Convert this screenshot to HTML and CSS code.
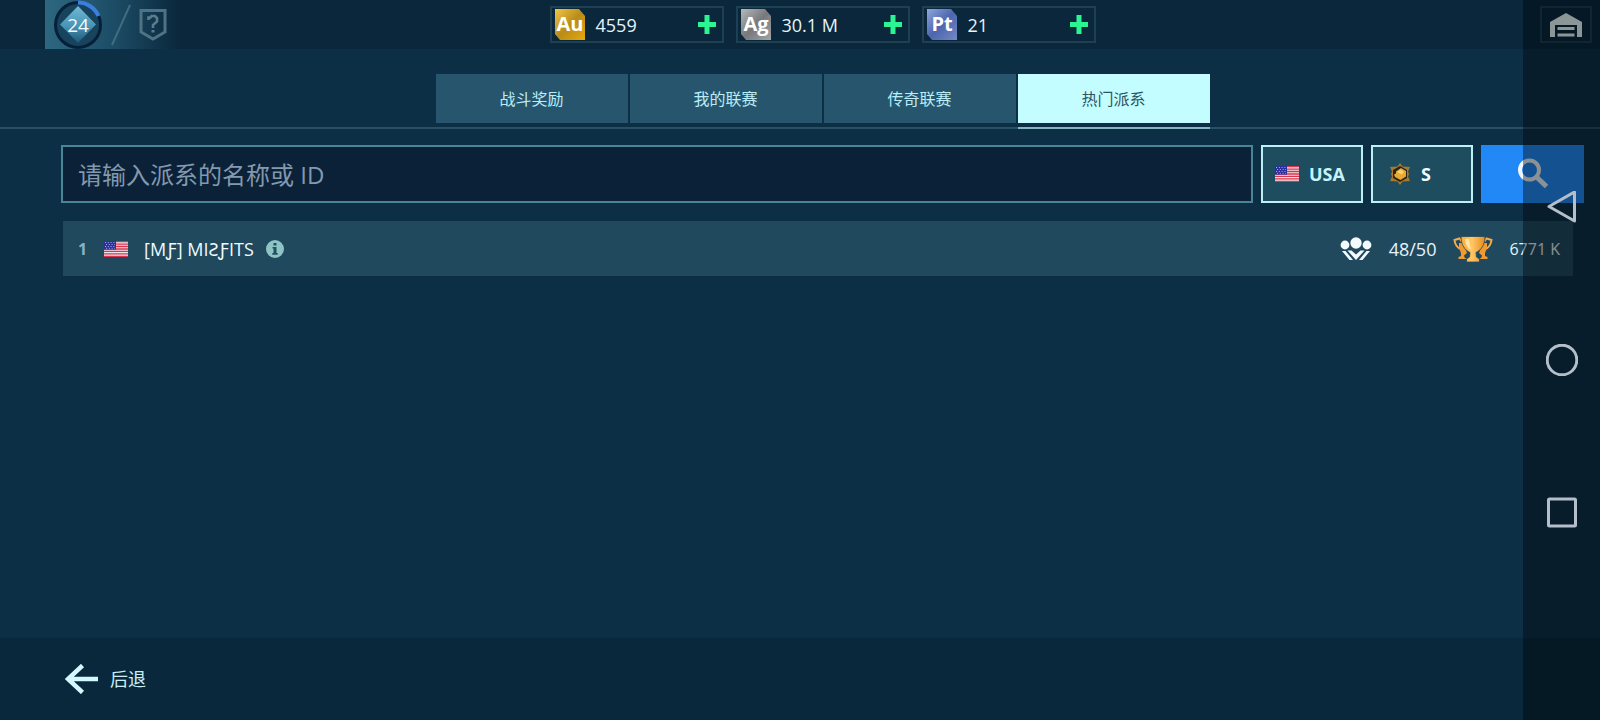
FILE: index.html
```html
<!DOCTYPE html>
<html lang="zh-CN">
<head>
<meta charset="utf-8">
<meta name="viewport" content="width=device-width, initial-scale=1">
<title>热门派系</title>
<link rel="stylesheet" href="styles.css">
</head>
<body>
<svg class="defs" aria-hidden="true">
  <defs>
    <linearGradient id="gold" x1="0" y1="0" x2="1" y2="1"><stop offset="0" stop-color="#f0c648"/><stop offset=".5" stop-color="#b98c18"/><stop offset="1" stop-color="#e6a80c"/></linearGradient>
    <linearGradient id="silver" x1="0" y1="0" x2="1" y2="1"><stop offset="0" stop-color="#b9b9bb"/><stop offset=".5" stop-color="#77787b"/><stop offset="1" stop-color="#a3a4a7"/></linearGradient>
    <linearGradient id="platinum" x1="0" y1="0" x2="1" y2="1"><stop offset="0" stop-color="#8ea6de"/><stop offset=".5" stop-color="#4c66ae"/><stop offset="1" stop-color="#7488c4"/></linearGradient>
    <linearGradient id="gem" x1="0" y1="0" x2="0" y2="1"><stop offset="0" stop-color="#6fb9d6"/><stop offset=".55" stop-color="#4a93b5"/><stop offset="1" stop-color="#1d5676"/></linearGradient>
    <linearGradient id="cup" x1="0" y1="0" x2="1" y2="0"><stop offset="0" stop-color="#f7a93a"/><stop offset=".45" stop-color="#ffc765"/><stop offset="1" stop-color="#e88a1c"/></linearGradient>
    <symbol id="plus" viewBox="0 0 18 19"><path fill="#2bf592" d="M6.500 0h5v7h6.500v5h-6.500v7h-5v-7H0V7h6.500z"/></symbol>
    <symbol id="flag" viewBox="0 0 24 16">
      <path fill="#f0e6ea" d="M0 0h24v16H0z"/>
      <path stroke="#d8354f" stroke-width="1.300" d="M0 .7h24M0 3.100h24M0 5.500h24M0 8h24M0 10.400h24M0 12.900h24M0 15.300h24"/>
      <path fill="#2b2f9c" d="M0 0h12v8.600H0z"/>
      <path stroke="#a9aee6" stroke-dasharray="1 1.800" d="M1 1.500h10M2 3.500h9M1 5.500h10M2 7.300h9"/>
    </symbol>
  </defs>
</svg>

<header class="topbar">
  <div class="profile">
    <svg class="level" viewBox="0 0 50 50" role="img" aria-label="24">
      <circle cx="25" cy="25" r="22.500" fill="#17435c" stroke="#06203a" stroke-width="3"/>
      <path fill="none" stroke="#3a7fe0" stroke-width="4" d="M25 2.500A22.500 22.500 0 0 1 45.500 16"/>
      <path fill="url(#gem)" d="M25 6l18 18.500L25 43 7 24.500z"/>
      <text class="level-text" x="25" y="32" text-anchor="middle">24</text>
    </svg>
    <svg class="slash" viewBox="0 0 20 42" aria-hidden="true"><path stroke="#3f6c81" stroke-width="2" d="M19 1L1 41"/></svg>
    <svg class="shield" viewBox="0 0 28 34" aria-hidden="true">
      <path fill="none" stroke="#4f7384" stroke-width="3" d="M2 2.500h24v21.500L14 31 2 24z"/>
      <path fill="none" stroke="#5a7d8d" stroke-width="2.600" d="M9.500 12V9.500h2L12.500 8h3.500l2 2v3.500l-4 3.500v3"/>
      <path fill="#5a7d8d" d="M12.500 22h3v2.500h-3z"/>
    </svg>
  </div>
  <div class="wallet">
    <div class="coin">
      <svg class="coin-icon" viewBox="0 0 32 32" aria-hidden="true"><path fill="url(#gold)" d="M1 0h24l6 7v24H6l-5-6z"/><text class="metal" x="16" y="22" text-anchor="middle">Au</text></svg>
      <span class="amount">4559</span>
      <button class="add" type="button" aria-label="Au +"><svg class="plus"><use href="#plus"/></svg></button>
    </div>
    <div class="coin">
      <svg class="coin-icon" viewBox="0 0 32 32" aria-hidden="true"><path fill="url(#silver)" d="M1 0h24l6 7v24H6l-5-6z"/><text class="metal" x="16" y="22" text-anchor="middle">Ag</text></svg>
      <span class="amount">30.1 M</span>
      <button class="add" type="button" aria-label="Ag +"><svg class="plus"><use href="#plus"/></svg></button>
    </div>
    <div class="coin">
      <svg class="coin-icon" viewBox="0 0 32 32" aria-hidden="true"><path fill="url(#platinum)" d="M1 0h24l6 7v24H6l-5-6z"/><text class="metal" x="16" y="22" text-anchor="middle">Pt</text></svg>
      <span class="amount">21</span>
      <button class="add" type="button" aria-label="Pt +"><svg class="plus"><use href="#plus"/></svg></button>
    </div>
  </div>
  <button class="garage" type="button" aria-label="机库">
    <svg class="garage-icon" viewBox="0 0 32 24" aria-hidden="true"><path fill="#f2ffff" d="M0 24V9L16 0l16 9v15h-5V12H5v12zM7.500 14h17v3h-17zM7.500 20.500h17v3h-17z"/></svg>
  </button>
</header>

<nav class="tabs">
  <button class="tab" type="button">战斗奖励</button>
  <button class="tab" type="button">我的联赛</button>
  <button class="tab" type="button">传奇联赛</button>
  <button class="tab tab-active" type="button" aria-current="page">热门派系</button>
</nav>

<main class="content">
  <form class="search">
    <input class="query" type="text" placeholder="请输入派系的名称或 ID" aria-label="请输入派系的名称或 ID">
    <label class="filter" aria-label="国家">
      <svg class="flag" aria-hidden="true"><use href="#flag"/></svg>
      <select class="pick" aria-label="国家"><option>USA</option></select>
    </label>
    <label class="filter filter-league" aria-label="联赛">
      <svg class="league" viewBox="0 0 22 22" aria-hidden="true">
        <path fill="#a8792e" d="M11 0l2.500 3.500L21 4l-2 4.500 1 2.500-1 2.500 2 4.500-7.500.5L11 22l-2.500-3.500L1 18l2-4.500L2 11l1-2.500L1 4l7.500-.5z"/>
        <path fill="#2a2418" d="M11 3l7 4v8l-7 4-7-4V7z"/>
        <path fill="#e8a832" d="M12 5l5 3v5.500L11.500 17 6 14l-1-2.500 2-1V8.500z"/>
        <path fill="#f8d468" d="M8 9l3.500-2.500L15 9l-2.500 2.500z"/>
      </svg>
      <select class="pick pick-league" aria-label="联赛"><option>S</option></select>
    </label>
    <button class="go" type="submit" aria-label="搜索">
      <svg class="lens" viewBox="0 0 32 32" aria-hidden="true"><circle cx="12.500" cy="12" r="9.500" fill="none" stroke="#f2f6fa" stroke-width="4"/><path stroke="#f2f6fa" stroke-width="5" d="M19 18.500l10.500 10"/></svg>
    </button>
  </form>

  <ol class="ranking">
    <li class="clan">
      <span class="rank">1</span>
      <svg class="flag" role="img" aria-label="USA"><use href="#flag"/></svg>
      <span class="name">[MƑ] MIƧƑITS</span>
      <button class="info" type="button" aria-label="信息">
        <svg class="info-icon" viewBox="0 0 18 18" aria-hidden="true"><circle cx="9" cy="9" r="9" fill="#8fc4c6"/><path fill="#23505f" d="M7.500 3h3v2.500h-3zM6.500 7h4v6h1.200v1.700H6.300V13h1.200V8.600h-1z"/></svg>
      </button>
      <svg class="members" viewBox="0 0 32 24" aria-hidden="true">
        <g fill="#f4fbff"><circle cx="16" cy="6" r="5.700"/><circle cx="5" cy="8" r="4.400"/><circle cx="27" cy="8" r="4.400"/></g>
        <path fill="#f4fbff" d="M7.500 13.500h4l4.500 4 4.500-4h4L16 23zM2 14h3.500l7.500 9H9.500zM30 14h-3.500L19 23h3.500z"/>
      </svg>
      <span class="count">48/50</span>
      <svg class="trophy" viewBox="0 0 40 26" aria-hidden="true">
        <path fill="none" stroke="#f3ac4c" stroke-width="2" d="M9 6L6.500 2.500 1.500 4c.5 4.500 2.500 7 5.500 9M31 6l2.500-3.500 5 1.500c-.5 4.500-2.500 7-5.500 9"/>
        <path fill="#f09a30" d="M6 7h4l4 10-3 2.500.5 2 2 1.500H5.500v-2l2.500-1V17L6 12zM34 7h-4l-4 10 3 2.500-.5 2-2 1.500h8v-2L32 20v-3l2-5z"/>
        <path fill="url(#cup)" stroke="#20495d" stroke-width=".8" d="M8 .5h24c0 8-3.500 13.500-9 16l.5 4.500 3 2v3h-13v-3l3-2 .5-4.500C11.500 14 8 8.500 8 .5z"/>
        <path fill="#ffe3a0" d="M12 3h4l2 11c-3.500-2-6-6-6-11z"/>
      </svg>
      <span class="score">6771 K</span>
    </li>
  </ol>
</main>

<footer class="bottom">
  <button class="back" type="button">
    <svg class="arrow" viewBox="0 0 34 30" aria-hidden="true"><path fill="none" stroke="#d3f8ff" stroke-width="4.500" d="M33 15H3M17.500 1.500L3 15l14.500 13.500"/></svg>
    <span>后退</span>
  </button>
</footer>

<div class="system-nav">
  <button class="key" type="button" aria-label="返回"><svg class="key-icon" viewBox="0 0 32 32"><path fill="none" stroke="#b4bfc9" stroke-width="3" stroke-linejoin="round" d="M28.500 1v29L3 15.500z"/></svg></button>
  <button class="key" type="button" aria-label="主页"><svg class="key-icon" viewBox="0 0 32 32"><circle cx="16" cy="16" r="14.800" fill="none" stroke="#b4bfc9" stroke-width="3"/></svg></button>
  <button class="key" type="button" aria-label="最近"><svg class="key-icon" viewBox="0 0 32 32"><rect x="2.500" y="2" width="27" height="27" rx="1" fill="none" stroke="#b4bfc9" stroke-width="3"/></svg></button>
</div>
</body>
</html>
```
FILE: styles.css
```css
* { box-sizing: border-box; }

body {
  margin: 0;
  min-height: 100vh;
  display: flex;
  flex-direction: column;
  background: #0d2f45;
  color: #e6f4fa;
  font: 18px/24px "Open Sans", "Noto Sans", "Noto Sans CJK SC", sans-serif;
}

svg { display: block; flex: none; }

button, input, select {
  margin: 0;
  padding: 0;
  border: 0;
  border-radius: 0;
  background: none;
  color: inherit;
  font: inherit;
}

.defs { position: absolute; width: 0; height: 0; }

/* Top bar */
.topbar {
  display: grid;
  grid-template-columns: 1fr auto 1fr;
  align-items: center;
  height: 49px;
  padding-left: 45px;
  background: #0a273b;
}

.profile {
  display: flex;
  align-items: center;
  gap: 8px;
  height: 49px;
  width: 136px;
  padding-left: 8px;
  background: linear-gradient(90deg, #2d6880, #1d4d66 50%, #0f3248 85%, #0a273b);
}

.level { width: 50px; height: 50px; }
.level-text { font-size: 19px; fill: #f2fbff; }
.slash { width: 20px; height: 42px; }
.shield { width: 28px; height: 34px; }

.wallet { display: flex; gap: 12px; }

.coin {
  display: flex;
  align-items: center;
  width: 174px;
  height: 37px;
  padding: 0 6px 0 2px;
  border: 2px solid #1d4053;
}

.coin-icon { width: 32px; height: 32px; }
.metal { font: bold 20px "Open Sans", "Noto Sans", sans-serif; fill: #fff; }
.amount { flex: 1; padding-left: 10px; }
.add { cursor: pointer; }
.plus { width: 18px; height: 19px; }

.garage {
  justify-self: end;
  display: grid;
  place-items: center;
  width: 52px;
  height: 37px;
  margin-right: 8px;
  border: 2px solid #1d4053;
}

.garage-icon { width: 32px; height: 24px; }

/* Tabs */
.tabs {
  display: flex;
  justify-content: center;
  gap: 2px;
  height: 80px;
  padding: 25px 0 0 45px;
  border-bottom: 2px solid #295065;
}

.tab {
  width: 192px;
  height: 49px;
  background: #27556d;
  color: #b9edf7;
  font-size: 16px;
}

.tab-active {
  position: relative;
  background: #c3fdff;
  color: #2c5563;
}

.tab-active::after {
  content: "";
  position: absolute;
  left: 0;
  right: 0;
  top: 53px;
  height: 2px;
  background: #85b5c0;
}

/* Search */
.content { flex: 1; padding: 16px 16px 0 61px; }

.search { display: flex; gap: 8px; height: 58px; }

.query {
  flex: 1;
  min-width: 0;
  padding: 0 15px;
  border: 2px solid #4a8497;
  background: #0b2137;
  font-size: 24px;
}

.query::placeholder { color: #8299ae; opacity: 1; }

.filter {
  display: flex;
  align-items: center;
  gap: 10px;
  width: 102px;
  padding-left: 12px;
  border: 2px solid #bdeff6;
  background: #1e4d5f;
}

.filter-league { padding-left: 16px; }
.flag { width: 24px; height: 16px; }
.league { width: 22px; height: 22px; }

.pick {
  appearance: none;
  color: #c5f5fb;
  font-size: 18px;
  font-weight: bold;
}

.pick-league { color: #f4fbff; }

.go {
  display: grid;
  place-items: center;
  width: 103px;
  background: #2288f5;
}

.lens { width: 32px; height: 32px; }

/* Ranking */
.ranking {
  margin: 18px 11px 0 2px;
  padding: 0;
  list-style: none;
}

.clan {
  display: flex;
  align-items: center;
  height: 55px;
  padding: 0 13px 0 15px;
  background: #20495d;
}

.rank { width: 26px; color: #86b3c2; font-size: 16px; font-weight: bold; }
.name { padding: 0 12px 0 16px; color: #f0faff; }
.info { margin-right: auto; }
.info-icon { width: 18px; height: 18px; }
.members { width: 32px; height: 24px; }
.count { padding: 0 17px; }
.trophy { width: 40px; height: 26px; }
.score { padding-left: 16px; font-size: 16px; }

/* Footer */
.bottom {
  display: flex;
  align-items: center;
  height: 82px;
  padding-left: 65px;
  background: #0a283b;
}

.back {
  display: flex;
  align-items: center;
  gap: 11px;
  color: #c9eef6;
}

.arrow { width: 34px; height: 30px; }

/* System navigation laid over the page */
.system-nav {
  position: fixed;
  top: 0;
  right: 0;
  bottom: 0;
  display: flex;
  flex-direction: column;
  align-items: center;
  justify-content: center;
  gap: 121px;
  width: 77px;
  background: rgba(0, 4, 8, .42);
}

.key-icon { width: 32px; height: 32px; }
```
